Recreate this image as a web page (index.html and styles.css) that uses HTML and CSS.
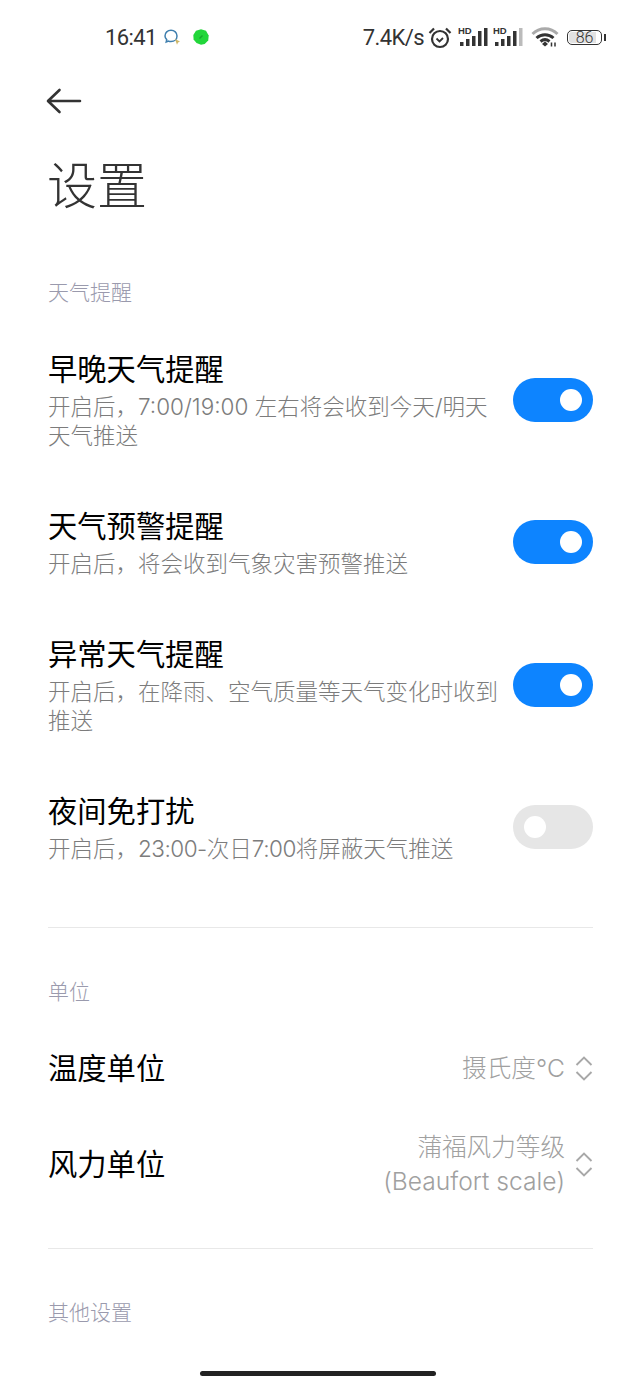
FILE: index.html
```html
<!DOCTYPE html>
<html>
<head>
    <title>设置</title>
    <link rel="stylesheet" href="styles.css">
</head>
<body>
    <div class="status-bar">
        <div class="status-left">
            <span class="clock">16:41</span>
            <svg class="chat-icon" width="17" height="16" viewBox="0 0 17 16">
                <path d="M1 7c0-3.300 2.600-5.800 6-5.800S13 3.700 13 7s-2.600 5.600-6 5.600c-.9 0-1.700-.1-2.500-.5L2.200 13l.5-2.400C1.600 9.600 1 8.400 1 7z" fill="none" stroke="#3f7fae" stroke-width="1.500"/>
                <path d="M11 10l5 2.500-2 1-1 2.200z" fill="#cdb565"/>
            </svg>
            <svg class="shield-icon" width="16" height="16" viewBox="0 0 16 16">
                <path d="M8 .3l5 1.500 2.700 4.700-.5 5-3.500 3.500L8 15.700 3.500 14 .6 10.500.3 6 3 1.800z" fill="#22d63a"/>
                <path d="M6.500 9.500l3-3" stroke="#14a82b" stroke-width="1.500"/>
            </svg>
        </div>
        <div class="status-right">
            <span class="speed">7.4K/s</span>
            <svg class="alarm" width="24" height="23" viewBox="0 0 24 23" fill="none" stroke="#333" stroke-width="2.200">
                <circle cx="12" cy="13" r="8"/>
                <path d="M8.500 12.500l3 3 3.500-3.500" stroke-width="1.800"/>
                <path d="M1.500 7l4.500-4.500M22.500 7L18 2.500"/>
            </svg>
            <svg class="signal" width="30" height="24" viewBox="0 -2 30 24">
                <text class="hd" x="0" y="7">HD</text>
                <rect x="2" y="15" width="3.500" height="4" fill="#333"/>
                <rect x="8" y="12" width="3.500" height="7" fill="#333"/>
                <rect x="14" y="9" width="3.500" height="10" fill="#333"/>
                <rect x="20" y="4" width="3.500" height="15" fill="#333"/>
                <rect x="26" y="1" width="3.500" height="18" fill="#333"/>
            </svg>
            <svg class="signal" width="30" height="24" viewBox="0 -2 30 24">
                <text class="hd" x="0" y="7">HD</text>
                <rect x="2" y="15" width="3.500" height="4" fill="#333"/>
                <rect x="8" y="12" width="3.500" height="7" fill="#333"/>
                <rect x="14" y="9" width="3.500" height="10" fill="#333"/>
                <rect x="20" y="4" width="3.500" height="15" fill="#333"/>
                <rect x="26" y="1" width="3.500" height="18" fill="#bbb"/>
            </svg>
            <svg class="wifi" width="28" height="20" viewBox="0 0 28 20" fill="none" stroke-width="3">
                <path d="M1.500 7C8.500 0 19.500 0 26.500 7" stroke="#aaa"/>
                <path d="M5.500 11c5-4.500 12-4.500 17 0" stroke="#333"/>
                <path d="M9.500 14.500c3-2.500 6-2.500 9 0" stroke="#333"/>
                <path d="M11 17l3-2.500 3 2.500-3 2.500z" fill="#333" stroke="none"/>
                <path d="M20.500 15.500v4M24 15.500v4" stroke="#333" stroke-width="1.500"/>
            </svg>
            <div class="battery">
                <div class="battery-body"><span>86</span></div>
                <div class="battery-tip"></div>
            </div>
        </div>
    </div>

    <div class="back-row">
        <svg width="36" height="28" viewBox="0 0 36 28" fill="none" stroke="#333" stroke-width="2.600" stroke-linecap="round" stroke-linejoin="round">
            <path d="M13.500 3L2 14l11.500 11M2.500 14H34"/>
        </svg>
    </div>

    <h1 class="page-title">设置</h1>

    <section class="section section-alerts">
        <div class="section-label">天气提醒</div>
        <div class="toggle-list">
            <div class="toggle-row">
                <div class="toggle-text">
                    <div class="row-title">早晚天气提醒</div>
                    <div class="row-sub">开启后，7:00/19:00 左右将会收到今天/明天天气推送</div>
                </div>
                <div class="switch on"><i></i></div>
            </div>
            <div class="toggle-row">
                <div class="toggle-text">
                    <div class="row-title">天气预警提醒</div>
                    <div class="row-sub">开启后，将会收到气象灾害预警推送</div>
                </div>
                <div class="switch on"><i></i></div>
            </div>
            <div class="toggle-row">
                <div class="toggle-text">
                    <div class="row-title">异常天气提醒</div>
                    <div class="row-sub">开启后，在降雨、空气质量等天气变化时收到推送</div>
                </div>
                <div class="switch on"><i></i></div>
            </div>
            <div class="toggle-row">
                <div class="toggle-text">
                    <div class="row-title">夜间免打扰</div>
                    <div class="row-sub">开启后，<span class="tight">23:00-</span>次日<span class="tight">7:00</span>将屏蔽天气推送</div>
                </div>
                <div class="switch"><i></i></div>
            </div>
        </div>
    </section>

    <div class="divider"></div>

    <section class="section">
        <div class="section-label">单位</div>
        <div class="unit-row unit-temp">
            <div class="row-title">温度单位</div>
            <div class="unit-value">
                <span>摄氏度°C</span>
                <svg width="18" height="25" viewBox="0 0 18 25" fill="none" stroke="#a8a8a8" stroke-width="1.900">
                    <path d="M1.500 9L9 1.500 16.500 9M1.500 16L9 23.500 16.500 16"/>
                </svg>
            </div>
        </div>
        <div class="unit-row unit-wind">
            <div class="row-title">风力单位</div>
            <div class="unit-value">
                <span>蒲福风力等级<br>(Beaufort scale)</span>
                <svg width="18" height="25" viewBox="0 0 18 25" fill="none" stroke="#a8a8a8" stroke-width="1.900">
                    <path d="M1.500 9L9 1.500 16.500 9M1.500 16L9 23.500 16.500 16"/>
                </svg>
            </div>
        </div>
    </section>

    <div class="divider"></div>

    <section class="section">
        <div class="section-label">其他设置</div>
    </section>

    <div class="home-bar"></div>
</body>
</html>
```

FILE: styles.css
```css
body {
    font-family: "Noto Sans CJK SC", "Noto Sans", sans-serif;
    background-color: #fff;
    margin: 0;
    padding: 0;
    width: 640px;
    height: 1387px;
    overflow: hidden;
    position: relative;
    color: #000;
}
.status-bar {
    height: 74px;
    padding: 0 34px 0 105px;
    display: flex;
    justify-content: space-between;
    align-items: center;
    box-sizing: border-box;
    color: #333;
}
.status-left, .status-right {
    display: flex;
    align-items: center;
}
.clock {
    font-family: Roboto, sans-serif;
    font-size: 22px;
    letter-spacing: -0.6px;
    margin-right: 7px;
}
.shield-icon {
    margin-left: 12px;
}
.speed {
    font-family: Roboto, sans-serif;
    font-size: 22px;
    letter-spacing: -0.6px;
    margin-right: 4px;
}
.alarm {
    margin-right: 6px;
}
.signal {
    margin-right: 5px;
}
.wifi {
    margin-left: 3px;
    margin-right: 8px;
}
.hd {
    font-family: "Liberation Sans", sans-serif;
    font-size: 9.500px;
    font-weight: bold;
    fill: #333;
}
.battery {
    display: flex;
    align-items: center;
}
.battery-body {
    width: 31px;
    height: 11px;
    border: 1.500px solid #333;
    border-radius: 5px;
    padding: 1px;
    background: linear-gradient(90deg, #e2e2e2 88%, #fff 88%) content-box;
    display: flex;
    align-items: center;
    justify-content: center;
    font-family: Roboto, sans-serif;
    font-size: 16px;
    font-weight: 300;
}
.battery-tip {
    width: 2px;
    height: 7px;
    margin-left: 2px;
    background-color: #333;
}
.back-row {
    height: 28px;
    padding: 13px 0 0 46px;
}
.page-title {
    margin: 37px 0 0 47px;
    font-size: 50px;
    line-height: 60px;
    font-weight: 300;
    color: #333;
}
.section {
    padding: 0 48px;
}
.section-alerts {
    margin-top: 64px;
}
.section-label {
    margin-top: 47px;
    font-size: 21px;
    line-height: 30px;
    color: #9a9aad;
    font-weight: 300;
}
.section-alerts .section-label {
    margin-top: 0;
}
.toggle-list {
    margin-top: 42px;
    margin-bottom: 64px;
    display: flex;
    flex-direction: column;
    gap: 55px;
}
.toggle-row {
    display: flex;
    justify-content: space-between;
    align-items: center;
}
.toggle-text {
    width: 450px;
}
.row-title {
    font-size: 29.300px;
    line-height: 38px;
    font-weight: 400;
    color: #000;
}
.row-sub {
    margin-top: 6px;
    font-family: Inter, "Noto Sans CJK SC", sans-serif;
    font-size: 22.500px;
    line-height: 29px;
    font-weight: 300;
    color: #7c7c7c;
}
.tight {
    letter-spacing: -0.5px;
}
.switch {
    width: 80px;
    height: 44px;
    margin-top: 1px;
    margin-right: -1px;
    border-radius: 22px;
    background-color: #0d84ff;
    position: relative;
    flex-shrink: 0;
}
.switch i {
    position: absolute;
    top: 11px;
    right: 11px;
    width: 22px;
    height: 22px;
    border-radius: 50%;
    background-color: #fff;
}
.switch:not(.on) {
    background-color: #e6e6e6;
}
.switch:not(.on) i {
    right: auto;
    left: 11px;
}
.divider {
    height: 1px;
    margin: 0 47px 0 48px;
    background-color: #e8e8e8;
}
.unit-row {
    display: flex;
    justify-content: space-between;
    align-items: center;
}
.unit-row .row-title {
    margin-bottom: 4px;
}
.unit-temp {
    margin-top: 28px;
    height: 70px;
}
.unit-wind {
    margin-top: 26px;
    height: 70px;
    margin-bottom: 49px;
}
.unit-value {
    display: flex;
    align-items: center;
    gap: 10px;
    margin-right: -1px;
    font-family: Inter, "Noto Sans CJK SC", sans-serif;
    font-size: 24.600px;
    line-height: 34px;
    font-weight: 300;
    color: #a0a0a0;
    text-align: right;
}
.home-bar {
    position: absolute;
    left: 200px;
    top: 1371px;
    width: 236px;
    height: 5px;
    border-radius: 3px;
    background-color: #222;
}
```
